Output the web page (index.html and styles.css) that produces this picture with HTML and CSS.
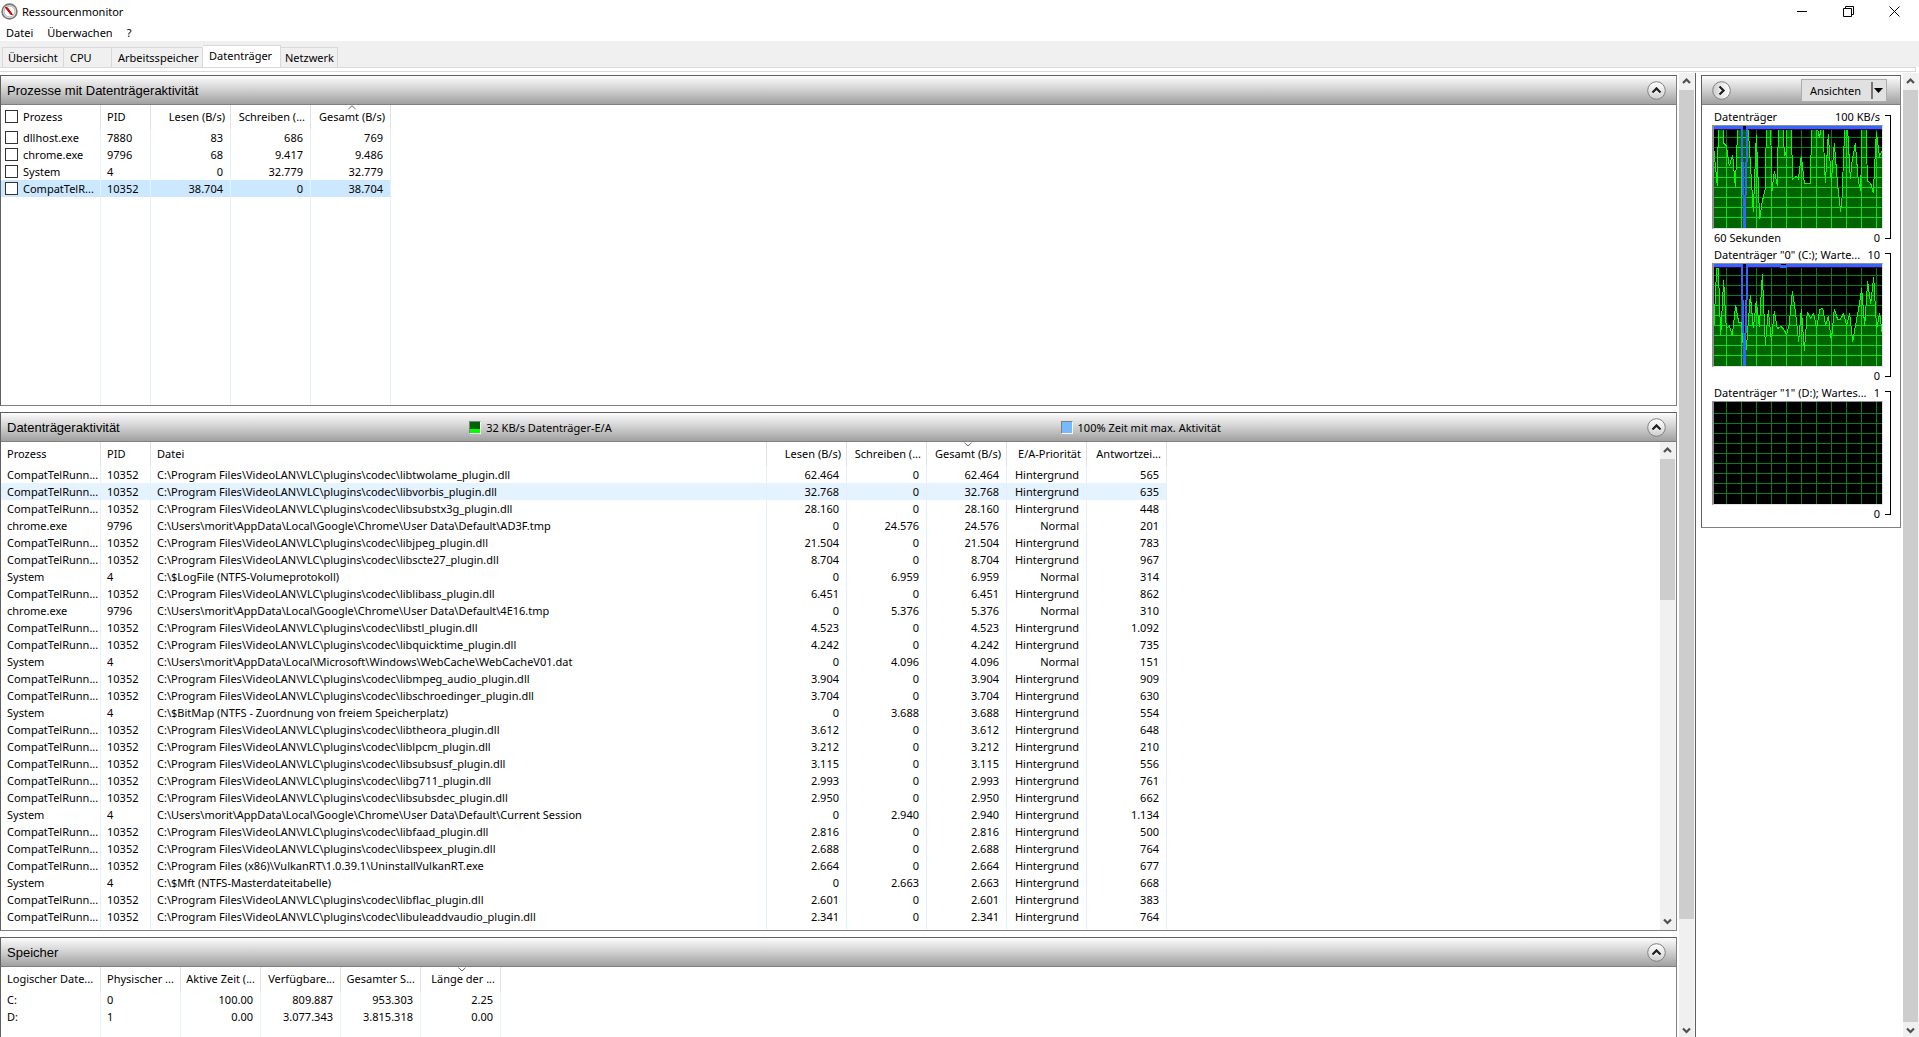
FILE: index.html
```html
<!DOCTYPE html>
<html lang="de">
<head>
<meta charset="utf-8">
<title>Ressourcenmonitor</title>
<link rel="stylesheet" href="styles.css">
</head>
<body>
<svg class="defs" aria-hidden="true">
  <symbol id="up" viewBox="0 0 15 16"><path d="M4 9.500 7.500 6 11 9.500" fill="none" stroke="#505050" stroke-width="2.200"/></symbol>
  <symbol id="down" viewBox="0 0 15 16"><path d="M4 6 7.500 9.500 11 6" fill="none" stroke="#505050" stroke-width="2.200"/></symbol>
  <symbol id="chev" viewBox="0 0 19 19"><circle cx="9.500" cy="9.500" r="8.800" fill="url(#disc)" stroke="#808080"/><path d="M5.500 11.500 9.500 7.500 13.500 11.500" fill="none" stroke="#fff" stroke-width="4"/><path d="M5.500 11.500 9.500 7.500 13.500 11.500" fill="none" stroke="#222" stroke-width="2.400"/></symbol>
  <symbol id="sortup" viewBox="0 0 8 5"><path d="M.5 4 4 .7 7.500 4" fill="none" stroke="#666"/></symbol>
  <symbol id="sortdown" viewBox="0 0 8 5"><path d="M.5 .7 4 4 7.500 .7" fill="none" stroke="#666"/></symbol>
  <linearGradient id="disc" x2="0" y2="1"><stop stop-color="#fff"/><stop offset="1" stop-color="#cfcfcf"/></linearGradient>
  <path id="grid" d="M37.500 0V306M82.500 0V306M127.500 0V306M172.500 0V306M217.500 0V306M262.500 0V306M307.500 0V306M352.500 0V306M397.500 0V306M442.500 0V306M487.500 0V306M0 34.500H504M0 64.500H504M0 94.500H504M0 124.500H504M0 154.500H504M0 184.500H504M0 214.500H504M0 244.500H504M0 274.500H504" fill="none" stroke-width="3"/>
  <path id="area1" d="M0 76 10 180 13 10 27 10 29 52 37 60 46 120 56 86 64 182 71 10 103 10 118 258 127 26 137 280 144 230 154 188 157 10 170 10 174 196 181 135 190 180 193 10 208 10 211 90 216 80 218 10 232 10 236 160 246 150 253 158 262 90 271 172 289 172 293 10 311 10 316 36 321 10 327 10 334 170 343 24 352 168 361 52 371 178 380 258 384 215 392 10 401 10 409 160 414 108 424 52 433 165 440 194 444 10 457 10 460 165 470 172 478 200 487 18 496 90 504 76"/>
  <path id="area2" d="M0 185 8 12 13 12 20 217 29 48 37 195 46 185 55 215 65 123 74 175 83 175 88 250 97 257 101 200 109 93 118 192 127 110 136 188 145 30 154 243 163 138 172 230 181 140 190 195 200 187 209 195 218 212 226 178 235 82 244 140 254 233 262 135 271 260 280 145 290 162 299 148 308 192 317 137 326 133 335 185 343 155 352 230 361 135 371 167 380 165 389 148 398 185 407 148 416 233 428 165 434 135 443 73 452 185 461 52 470 120 479 40 488 195 497 147 504 205"/>
  <clipPath id="clip1"><path d="M0 76 10 180 13 10 27 10 29 52 37 60 46 120 56 86 64 182 71 10 103 10 118 258 127 26 137 280 144 230 154 188 157 10 170 10 174 196 181 135 190 180 193 10 208 10 211 90 216 80 218 10 232 10 236 160 246 150 253 158 262 90 271 172 289 172 293 10 311 10 316 36 321 10 327 10 334 170 343 24 352 168 361 52 371 178 380 258 384 215 392 10 401 10 409 160 414 108 424 52 433 165 440 194 444 10 457 10 460 165 470 172 478 200 487 18 496 90 504 76V306H0Z"/></clipPath>
  <clipPath id="clip2"><path d="M0 185 8 12 13 12 20 217 29 48 37 195 46 185 55 215 65 123 74 175 83 175 88 250 97 257 101 200 109 93 118 192 127 110 136 188 145 30 154 243 163 138 172 230 181 140 190 195 200 187 209 195 218 212 226 178 235 82 244 140 254 233 262 135 271 260 280 145 290 162 299 148 308 192 317 137 326 133 335 185 343 155 352 230 361 135 371 167 380 165 389 148 398 185 407 148 416 233 428 165 434 135 443 73 452 185 461 52 470 120 479 40 488 195 497 147 504 205V306H0Z"/></clipPath>
</svg>

<header class="titlebar">
  <svg class="app-icon" viewBox="0 0 17 17"><circle cx="8.500" cy="8.500" r="7.400" fill="#e8e8e8" stroke="#777" stroke-width="1.600"/><circle cx="8.500" cy="8.500" r="5.400" fill="#fff" stroke="#b4b4b4"/><path d="M4.300 4.300 6.500 4.800 11.500 11.500 9.500 11.200Z" fill="#e01010" stroke="#c00000"/></svg>
  <h1>Ressourcenmonitor</h1>
  <div class="window-buttons">
    <button aria-label="Minimieren"><svg viewBox="0 0 11 11"><path d="M0 5.500H10" stroke="#000"/></svg></button>
    <button aria-label="Verkleinern"><svg viewBox="0 0 11 11"><path d="M.5 2.500H8.500V10.500H.5ZM2.500 2.500V.5H10.500V8.500H8.500" fill="none" stroke="#000"/></svg></button>
    <button aria-label="Schließen"><svg viewBox="0 0 11 11"><path d="M.5 .5 10.500 10.500M10.500 .5 .5 10.500" stroke="#000"/></svg></button>
  </div>
</header>
<nav class="menu"><button>Datei</button><button>Überwachen</button><button>?</button></nav>
<div class="tabs" role="tablist">
  <button role="tab" class="tab t-over">Übersicht</button>
  <button role="tab" class="tab t-cpu">CPU</button>
  <button role="tab" class="tab t-mem">Arbeitsspeicher</button>
  <button role="tab" class="tab t-disk active" aria-selected="true">Datenträger</button>
  <button role="tab" class="tab t-net">Netzwerk</button>
</div>
<div class="tab-edge"></div>

<div class="workspace">
<main class="sections">
  <section class="panel processes">
    <div class="panel-head"><h2>Prozesse mit Datenträgeraktivität</h2><button class="round" aria-label="Reduzieren"><svg><use href="#chev"/></svg></button></div>
    <div class="panel-body">
    <table class="grid-table">
      <colgroup><col class="w-first"><col class="w-pid"><col class="w-num"><col class="w-num"><col class="w-num"></colgroup>
      <thead><tr><th><label><input type="checkbox">Prozess</label></th><th>PID</th><th class="n">Lesen (B/s)</th><th class="n">Schreiben (...</th><th class="n"><svg class="sort"><use href="#sortup"/></svg>Gesamt (B/s)</th></tr></thead>
      <tbody>
      <tr><td><label><input type="checkbox">dllhost.exe</label></td><td>7880</td><td class="n">83</td><td class="n">686</td><td class="n">769</td></tr>
      <tr><td><label><input type="checkbox">chrome.exe</label></td><td>9796</td><td class="n">68</td><td class="n">9.417</td><td class="n">9.486</td></tr>
      <tr><td><label><input type="checkbox">System</label></td><td>4</td><td class="n">0</td><td class="n">32.779</td><td class="n">32.779</td></tr>
      <tr class="selected"><td><label><input type="checkbox">CompatTelR...</label></td><td>10352</td><td class="n">38.704</td><td class="n">0</td><td class="n">38.704</td></tr>
      <tr class="rest"><td></td><td></td><td></td><td></td><td></td></tr>
      </tbody>
    </table>
    </div>
  </section>

  <section class="panel activity">
    <div class="panel-head with-legend"><h2>Datenträgeraktivität</h2>
      <span class="legend"><i class="swatch io"></i>32 KB/s Datenträger-E/A</span>
      <span class="legend"><i class="swatch busy"></i>100% Zeit mit max. Aktivität</span>
      <button class="round" aria-label="Reduzieren"><svg><use href="#chev"/></svg></button></div>
    <div class="panel-body">
    <table class="grid-table">
      <colgroup><col class="w-first"><col class="w-pid"><col class="w-file"><col class="w-num"><col class="w-num"><col class="w-num"><col class="w-num"><col class="w-num"></colgroup>
      <thead><tr><th>Prozess</th><th>PID</th><th>Datei</th><th class="n">Lesen (B/s)</th><th class="n">Schreiben (...</th><th class="n"><svg class="sort"><use href="#sortdown"/></svg>Gesamt (B/s)</th><th class="n">E/A-Priorität</th><th class="n">Antwortzei...</th></tr></thead>
      <tbody>
      <tr><td>CompatTelRunn...</td><td>10352</td><td>C:\Program Files\VideoLAN\VLC\plugins\codec\libtwolame_plugin.dll</td><td class="n">62.464</td><td class="n">0</td><td class="n">62.464</td><td class="n">Hintergrund</td><td class="n">565</td></tr>
      <tr class="hover"><td>CompatTelRunn...</td><td>10352</td><td>C:\Program Files\VideoLAN\VLC\plugins\codec\libvorbis_plugin.dll</td><td class="n">32.768</td><td class="n">0</td><td class="n">32.768</td><td class="n">Hintergrund</td><td class="n">635</td></tr>
      <tr><td>CompatTelRunn...</td><td>10352</td><td>C:\Program Files\VideoLAN\VLC\plugins\codec\libsubstx3g_plugin.dll</td><td class="n">28.160</td><td class="n">0</td><td class="n">28.160</td><td class="n">Hintergrund</td><td class="n">448</td></tr>
      <tr><td>chrome.exe</td><td>9796</td><td>C:\Users\morit\AppData\Local\Google\Chrome\User Data\Default\AD3F.tmp</td><td class="n">0</td><td class="n">24.576</td><td class="n">24.576</td><td class="n">Normal</td><td class="n">201</td></tr>
      <tr><td>CompatTelRunn...</td><td>10352</td><td>C:\Program Files\VideoLAN\VLC\plugins\codec\libjpeg_plugin.dll</td><td class="n">21.504</td><td class="n">0</td><td class="n">21.504</td><td class="n">Hintergrund</td><td class="n">783</td></tr>
      <tr><td>CompatTelRunn...</td><td>10352</td><td>C:\Program Files\VideoLAN\VLC\plugins\codec\libscte27_plugin.dll</td><td class="n">8.704</td><td class="n">0</td><td class="n">8.704</td><td class="n">Hintergrund</td><td class="n">967</td></tr>
      <tr><td>System</td><td>4</td><td>C:\$LogFile (NTFS-Volumeprotokoll)</td><td class="n">0</td><td class="n">6.959</td><td class="n">6.959</td><td class="n">Normal</td><td class="n">314</td></tr>
      <tr><td>CompatTelRunn...</td><td>10352</td><td>C:\Program Files\VideoLAN\VLC\plugins\codec\liblibass_plugin.dll</td><td class="n">6.451</td><td class="n">0</td><td class="n">6.451</td><td class="n">Hintergrund</td><td class="n">862</td></tr>
      <tr><td>chrome.exe</td><td>9796</td><td>C:\Users\morit\AppData\Local\Google\Chrome\User Data\Default\4E16.tmp</td><td class="n">0</td><td class="n">5.376</td><td class="n">5.376</td><td class="n">Normal</td><td class="n">310</td></tr>
      <tr><td>CompatTelRunn...</td><td>10352</td><td>C:\Program Files\VideoLAN\VLC\plugins\codec\libstl_plugin.dll</td><td class="n">4.523</td><td class="n">0</td><td class="n">4.523</td><td class="n">Hintergrund</td><td class="n">1.092</td></tr>
      <tr><td>CompatTelRunn...</td><td>10352</td><td>C:\Program Files\VideoLAN\VLC\plugins\codec\libquicktime_plugin.dll</td><td class="n">4.242</td><td class="n">0</td><td class="n">4.242</td><td class="n">Hintergrund</td><td class="n">735</td></tr>
      <tr><td>System</td><td>4</td><td>C:\Users\morit\AppData\Local\Microsoft\Windows\WebCache\WebCacheV01.dat</td><td class="n">0</td><td class="n">4.096</td><td class="n">4.096</td><td class="n">Normal</td><td class="n">151</td></tr>
      <tr><td>CompatTelRunn...</td><td>10352</td><td>C:\Program Files\VideoLAN\VLC\plugins\codec\libmpeg_audio_plugin.dll</td><td class="n">3.904</td><td class="n">0</td><td class="n">3.904</td><td class="n">Hintergrund</td><td class="n">909</td></tr>
      <tr><td>CompatTelRunn...</td><td>10352</td><td>C:\Program Files\VideoLAN\VLC\plugins\codec\libschroedinger_plugin.dll</td><td class="n">3.704</td><td class="n">0</td><td class="n">3.704</td><td class="n">Hintergrund</td><td class="n">630</td></tr>
      <tr><td>System</td><td>4</td><td>C:\$BitMap (NTFS - Zuordnung von freiem Speicherplatz)</td><td class="n">0</td><td class="n">3.688</td><td class="n">3.688</td><td class="n">Hintergrund</td><td class="n">554</td></tr>
      <tr><td>CompatTelRunn...</td><td>10352</td><td>C:\Program Files\VideoLAN\VLC\plugins\codec\libtheora_plugin.dll</td><td class="n">3.612</td><td class="n">0</td><td class="n">3.612</td><td class="n">Hintergrund</td><td class="n">648</td></tr>
      <tr><td>CompatTelRunn...</td><td>10352</td><td>C:\Program Files\VideoLAN\VLC\plugins\codec\liblpcm_plugin.dll</td><td class="n">3.212</td><td class="n">0</td><td class="n">3.212</td><td class="n">Hintergrund</td><td class="n">210</td></tr>
      <tr><td>CompatTelRunn...</td><td>10352</td><td>C:\Program Files\VideoLAN\VLC\plugins\codec\libsubsusf_plugin.dll</td><td class="n">3.115</td><td class="n">0</td><td class="n">3.115</td><td class="n">Hintergrund</td><td class="n">556</td></tr>
      <tr><td>CompatTelRunn...</td><td>10352</td><td>C:\Program Files\VideoLAN\VLC\plugins\codec\libg711_plugin.dll</td><td class="n">2.993</td><td class="n">0</td><td class="n">2.993</td><td class="n">Hintergrund</td><td class="n">761</td></tr>
      <tr><td>CompatTelRunn...</td><td>10352</td><td>C:\Program Files\VideoLAN\VLC\plugins\codec\libsubsdec_plugin.dll</td><td class="n">2.950</td><td class="n">0</td><td class="n">2.950</td><td class="n">Hintergrund</td><td class="n">662</td></tr>
      <tr><td>System</td><td>4</td><td>C:\Users\morit\AppData\Local\Google\Chrome\User Data\Default\Current Session</td><td class="n">0</td><td class="n">2.940</td><td class="n">2.940</td><td class="n">Hintergrund</td><td class="n">1.134</td></tr>
      <tr><td>CompatTelRunn...</td><td>10352</td><td>C:\Program Files\VideoLAN\VLC\plugins\codec\libfaad_plugin.dll</td><td class="n">2.816</td><td class="n">0</td><td class="n">2.816</td><td class="n">Hintergrund</td><td class="n">500</td></tr>
      <tr><td>CompatTelRunn...</td><td>10352</td><td>C:\Program Files\VideoLAN\VLC\plugins\codec\libspeex_plugin.dll</td><td class="n">2.688</td><td class="n">0</td><td class="n">2.688</td><td class="n">Hintergrund</td><td class="n">764</td></tr>
      <tr><td>CompatTelRunn...</td><td>10352</td><td>C:\Program Files (x86)\VulkanRT\1.0.39.1\UninstallVulkanRT.exe</td><td class="n">2.664</td><td class="n">0</td><td class="n">2.664</td><td class="n">Hintergrund</td><td class="n">677</td></tr>
      <tr><td>System</td><td>4</td><td>C:\$Mft (NTFS-Masterdateitabelle)</td><td class="n">0</td><td class="n">2.663</td><td class="n">2.663</td><td class="n">Hintergrund</td><td class="n">668</td></tr>
      <tr><td>CompatTelRunn...</td><td>10352</td><td>C:\Program Files\VideoLAN\VLC\plugins\codec\libflac_plugin.dll</td><td class="n">2.601</td><td class="n">0</td><td class="n">2.601</td><td class="n">Hintergrund</td><td class="n">383</td></tr>
      <tr><td>CompatTelRunn...</td><td>10352</td><td>C:\Program Files\VideoLAN\VLC\plugins\codec\libuleaddvaudio_plugin.dll</td><td class="n">2.341</td><td class="n">0</td><td class="n">2.341</td><td class="n">Hintergrund</td><td class="n">764</td></tr>
      <tr class="rest"><td></td><td></td><td></td><td></td><td></td><td></td><td></td><td></td></tr>
      </tbody>
    </table>
    <div class="scrollbar inner"><svg><use href="#up"/></svg><div class="track"><div class="thumb"></div></div><svg><use href="#down"/></svg></div>
    </div>
  </section>

  <section class="panel storage">
    <div class="panel-head"><h2>Speicher</h2><button class="round" aria-label="Reduzieren"><svg><use href="#chev"/></svg></button></div>
    <div class="panel-body">
    <table class="grid-table">
      <colgroup><col class="w-first"><col class="w-num"><col class="w-num"><col class="w-num"><col class="w-num"><col class="w-num"></colgroup>
      <thead><tr><th>Logischer Date...</th><th>Physischer ...</th><th class="n">Aktive Zeit (...</th><th class="n">Verfügbare...</th><th class="n">Gesamter S...</th><th class="n"><svg class="sort"><use href="#sortdown"/></svg>Länge der ...</th></tr></thead>
      <tbody>
      <tr><td>C:</td><td>0</td><td class="n">100.00</td><td class="n">809.887</td><td class="n">953.303</td><td class="n">2.25</td></tr>
      <tr><td>D:</td><td>1</td><td class="n">0.00</td><td class="n">3.077.343</td><td class="n">3.815.318</td><td class="n">0.00</td></tr>
      <tr class="rest"><td></td><td></td><td></td><td></td><td></td><td></td></tr>
      </tbody>
    </table>
    </div>
  </section>
</main>
<div class="scrollbar main-bar"><svg><use href="#up"/></svg><div class="track"><div class="thumb"></div></div><svg><use href="#down"/></svg></div>

<aside class="charts">
  <div class="panel chart-panel">
    <div class="panel-head"><button class="round right" aria-label="Ausblenden"><svg><use href="#chev"/></svg></button>
      <button class="views"><span>Ansichten</span><svg viewBox="0 0 14 17"><path d="M1 0V17" stroke="#777" stroke-width="2"/><path d="M3 6H12L7.500 11Z"/></svg></button></div>
    <div class="chart-list">
      <figure class="chart">
        <figcaption><span>Datenträger</span><span>100 KB/s</span></figcaption>
        <svg class="plot" viewBox="0 0 504 306" preserveAspectRatio="none"><rect width="504" height="306"/><use href="#grid" stroke="#0a7a1a"/><g clip-path="url(#clip1)"><rect width="504" height="306" fill="#006400"/><use href="#grid" stroke="#10dc20"/></g><use href="#area1" fill="none" stroke="#00ff00" stroke-width="3"/><path d="M0 10.500H504" stroke="#400040" stroke-width="3"/><path d="M0 4.500H81M102 4.500H504" stroke="#36f" stroke-width="9"/><path d="M84 0V108M99 0V108M87 108V207M96 108V207" stroke="#36f" stroke-width="6"/><path d="M91.500 207V306" stroke="#36f" stroke-width="9"/></svg>
        <div class="scale"><span>60 Sekunden</span><span>0</span></div>
        <i class="bracket"></i>
      </figure>
      <figure class="chart">
        <figcaption><span>Datenträger "0" (C:); Warte...</span><span>10</span></figcaption>
        <svg class="plot" viewBox="0 0 504 306" preserveAspectRatio="none"><rect width="504" height="306"/><use href="#grid" stroke="#0a7a1a"/><g clip-path="url(#clip2)"><rect width="504" height="306" fill="#006400"/><use href="#grid" stroke="#10dc20"/></g><use href="#area2" fill="none" stroke="#00ff00" stroke-width="3"/><path d="M0 10.500H504" stroke="#400040" stroke-width="3"/><path d="M0 4.500H81M102 4.500H504" stroke="#36f" stroke-width="9"/><path d="M201 1.500H216" stroke="#000" stroke-width="3"/><path d="M198 10.500H219" stroke="#36f" stroke-width="3"/><path d="M84 0V108M99 0V108M87 108V207M96 108V207" stroke="#36f" stroke-width="6"/><path d="M91.500 207V306" stroke="#36f" stroke-width="9"/></svg>
        <div class="scale"><span></span><span>0</span></div>
        <i class="bracket"></i>
      </figure>
      <figure class="chart">
        <figcaption><span>Datenträger "1" (D:); Wartes...</span><span>1</span></figcaption>
        <svg class="plot" viewBox="0 0 504 306" preserveAspectRatio="none"><rect width="504" height="306"/><use href="#grid" stroke="#0a7a1a"/></svg>
        <div class="scale"><span></span><span>0</span></div>
        <i class="bracket"></i>
      </figure>
    </div>
  </div>
</aside>
<div class="scrollbar side-bar"><svg><use href="#up"/></svg><div class="track"><div class="thumb"></div></div><svg><use href="#down"/></svg></div>
</div>
</body>
</html>
```
FILE: styles.css
```css
* { box-sizing: border-box; }
body {
  margin: 0;
  height: 100vh;
  display: flex;
  flex-direction: column;
  overflow: hidden;
  background: #fff;
  color: #000;
  font: 11px/17px "Noto Sans", "Open Sans", sans-serif;
}
button { font: inherit; color: inherit; border: 0; padding: 0; background: none; }
h1, h2, figure { margin: 0; font-weight: normal; }
.defs { position: absolute; width: 0; height: 0; }

.titlebar { display: flex; align-items: center; height: 24px; flex: none; padding: 0 2px 2px 1px; gap: 4px; }
.titlebar h1 { font-size: 11px; flex: 1; }
.app-icon { width: 17px; height: 17px; }
.window-buttons { display: flex; height: 20px; }
.window-buttons button { width: 46px; display: grid; place-items: center; }
.window-buttons svg { width: 11px; height: 11px; }

.menu { display: flex; gap: 14px; height: 17px; flex: none; padding-left: 6px; }

.tabs { display: flex; align-items: flex-end; flex: none; height: 26px; padding-left: 2px; background: #f0f0f0; }
.tab { height: 20px; padding: 0 6px; text-align: left; border: 1px solid #d9d9d9; border-bottom: 0; border-left: 0; white-space: nowrap; }
.t-over { width: 62px; padding: 0 5px; border-left: 1px solid #d9d9d9; }
.t-cpu { width: 48px; }
.t-mem { width: 91px; }
.t-disk { width: 78px; }
.t-net { width: 57px; padding: 0 4px; }
.tab.active { height: 22px; background: #fff; padding-bottom: 3px; }
.tab-edge { height: 5px; flex: none; margin-right: 3px; border: 1px solid #d9d9d9; border-left: 0; background: #fff; }

.workspace { flex: 1; min-height: 0; display: flex; padding-top: 1px; }
.sections { flex: 1; min-width: 0; display: flex; flex-direction: column; gap: 6px; padding-top: 2px; margin-right: 2px; }
.panel { border: 1px solid #808080; border-top-color: #606060; border-left-color: #606060; background: #fff; display: flex; flex-direction: column; }
.processes { flex: none; height: 331px; }
.activity { flex: 1; min-height: 0; }
.storage { flex: none; height: 100px; border-bottom: 0; }

.panel-head {
  display: flex; align-items: center; justify-content: space-between; flex: none;
  height: 29px; padding: 0 10px 0 6px;
  border-bottom: 1px solid #808080;
  background: linear-gradient(#fcfcfc, #d0d0d0 50%, #a0a0a0);
}
.panel-head h2 { font: 13px/17px "Liberation Sans", Arial, sans-serif; white-space: nowrap; }
.with-legend { display: grid; grid-template-columns: 279fr 357fr 354fr 19px; }
.legend { display: flex; align-items: center; gap: 5px; }
.swatch { width: 12px; height: 13px; border: 1px solid #fff; border-top-color: #808080; border-left-color: #808080; }
.io { background: linear-gradient(#006400 60%, #00ff00 60%); }
.busy { background: #76b9ff; }
.round { width: 19px; height: 19px; }
.round svg { display: block; width: 19px; height: 19px; }
.round.right { transform: rotate(90deg); }

.panel-body { flex: 1; min-height: 0; display: flex; justify-content: space-between; }
.grid-table { table-layout: fixed; width: 0; height: 100%; border-collapse: separate; border-spacing: 0; }
.w-first { width: 100px; }
.w-pid { width: 50px; }
.w-num { width: 80px; }
.w-file { width: 616px; }
.grid-table th, .grid-table td { padding: 0 0 0 6px; text-align: left; font-weight: normal; white-space: nowrap; border-right: 1px solid #e6f0fa; }
.grid-table th { position: relative; height: 24px; padding-bottom: 2px; border-right-color: #e0e0e0; }
.grid-table td { height: 17px; }
.grid-table .rest td { height: auto; }
.grid-table th.n { padding: 0 5px 2px 0; text-align: right; }
.grid-table td.n { padding: 0 7px 0 0; text-align: right; }
.selected td { background: #cce8ff; }
.hover td { background: #e5f3ff; }
.sort { position: absolute; top: 0; left: 50%; width: 8px; height: 5px; margin-left: -3px; }
.grid-table label { display: flex; align-items: center; gap: 5px; margin-left: -2px; }
.grid-table input { appearance: none; flex: none; width: 13px; height: 13px; margin: 0; border: 1px solid #333; background: #fff; }

.scrollbar { flex: none; width: 16px; display: flex; flex-direction: column; background: #f0f0f0; border-right: 1px solid #f6f6f6; }
.scrollbar svg { flex: none; width: 15px; height: 17px; }
.track { flex: 1; min-height: 0; }
.thumb { background: #cdcdcd; }
.inner .thumb { height: 31%; }
.main-bar, .side-bar { margin-bottom: -2px; }
.main-bar .thumb { height: 89%; }
.side-bar .thumb { height: 100%; }

.charts { flex: none; width: 208px; padding: 2px 2px 0 5px; border-left: 1px solid #606060; }
.chart-panel .panel-head { padding: 0 13px 0 10px; }
.views { display: flex; align-items: center; justify-content: space-between; width: 86px; height: 23px; padding: 0 1px 0 8px; border: 1px solid #adadad; background: #e1e1e1; }
.views svg { width: 14px; height: 17px; }
.chart-list { padding: 3px 9px 5px 10px; }
.chart { display: grid; grid-template-columns: 171px 6px; column-gap: 2px; }
.chart figcaption, .scale { grid-column: 1; display: flex; justify-content: space-between; padding: 0 3px 0 2px; height: 17px; white-space: nowrap; }
.plot { grid-column: 1; width: 171px; height: 104px; border: 1px solid #e3e3e3; border-top-color: #909090; border-left: 2px solid #909090; shape-rendering: crispEdges; }
.bracket { grid-column: 2; grid-row: 1 / 4; margin: 7px 0; border: 1px solid #000; border-left: 0; }
```
